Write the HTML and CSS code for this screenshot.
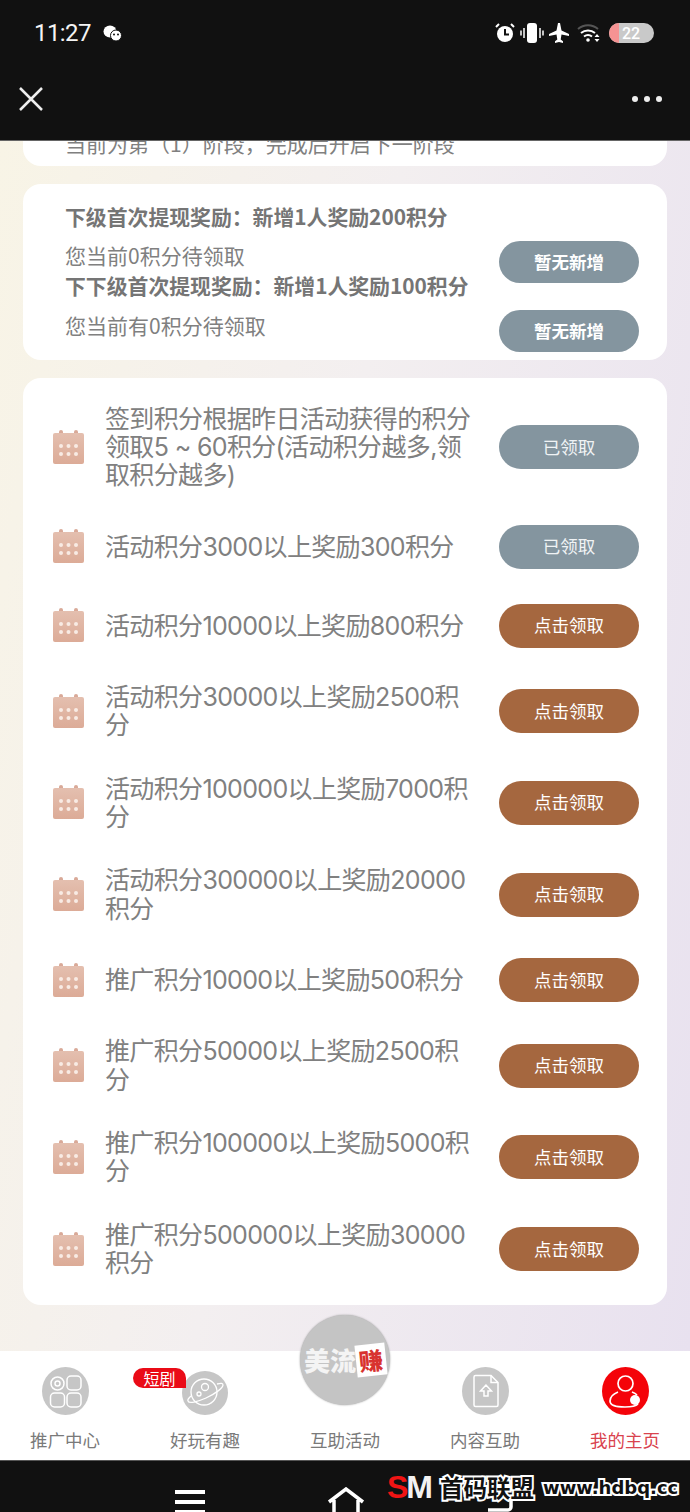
FILE: index.html
```html
<!DOCTYPE html>
<html lang="zh-CN">
<head>
    <meta charset="UTF-8">
    <meta name="viewport" content="width=device-width, initial-scale=1.0">
    <title>互助活动</title>
    <link rel="stylesheet" href="styles.css">
</head>
<body>
    <svg class="defs" width="0" height="0" aria-hidden="true">
        <defs>
            <linearGradient id="calFill" x1="0" y1="0" x2="0" y2="1">
                <stop offset="0" stop-color="#e4bfaf"/>
                <stop offset="1" stop-color="#dcab97"/>
            </linearGradient>
            <symbol id="calendar" viewBox="0 0 31 34">
                <rect x="6" y="0" width="4" height="7" rx="2" fill="#d9a998"/>
                <rect x="21" y="0" width="4" height="7" rx="2" fill="#d9a998"/>
                <path d="M2 3h27a2 2 0 0 1 2 2v27a2 2 0 0 1-2 2H2a2 2 0 0 1-2-2V5a2 2 0 0 1 2-2z" fill="url(#calFill)"/>
                <g fill="#f8ebe4">
                    <circle cx="8" cy="16" r="2"/><circle cx="15.500" cy="16" r="2"/><circle cx="23" cy="16" r="2"/>
                    <circle cx="8" cy="24" r="2"/><circle cx="15.500" cy="24" r="2"/><circle cx="23" cy="24" r="2"/>
                </g>
            </symbol>
        </defs>
    </svg>

    <header class="topbar">
        <div class="status">
            <div class="status-left">
                <span class="clock">11:27</span>
                <svg class="wechat" width="19" height="17" viewBox="0 0 19 17">
                    <ellipse cx="7" cy="6.500" rx="6.500" ry="6" fill="#fff"/>
                    <ellipse cx="13" cy="10.500" rx="5.500" ry="5.500" fill="#fff" stroke="#111" stroke-width="1"/>
                    <circle cx="11" cy="9.500" r="1" fill="#111"/><circle cx="15" cy="9.500" r="1" fill="#111"/>
                </svg>
            </div>
            <div class="status-right">
                <svg width="20" height="20" viewBox="0 0 20 20">
                    <circle cx="10" cy="11" r="8" fill="#fff"/>
                    <path d="M10 6v5.500h4" fill="none" stroke="#111" stroke-width="2"/>
                    <path d="M1 4l3-3M19 4l-3-3" stroke="#fff" stroke-width="2"/>
                </svg>
                <svg width="24" height="20" viewBox="0 0 24 20">
                    <rect x="7" y="0" width="10" height="20" rx="3" fill="#fff"/>
                    <path d="M4 5v10M1 7.500v5M20 5v10M23 7.500v5" stroke="#fff" stroke-width="1.500"/>
                </svg>
                <svg width="20" height="20" viewBox="0 0 20 20">
                    <path d="M9 0h2l1.500 7.500L20 11v2l-7.500-1.500-.8 5 2.300 1.700V20L10 19l-4 1v-1.800l2.300-1.700-.8-5L0 13v-2l7.500-3.500z" fill="#fff"/>
                </svg>
                <svg class="wifi" width="24" height="20" viewBox="0 0 24 20">
                    <path d="M1 6a15 15 0 0 1 20 0" fill="none" stroke="#555" stroke-width="2"/>
                    <path d="M4 10a11 11 0 0 1 14 0M7 13.500a6.500 6.500 0 0 1 8 0" fill="none" stroke="#fff" stroke-width="2"/>
                    <circle cx="11" cy="17" r="1.800" fill="#fff"/>
                    <path d="M20 11l2.500 3h-5zM20 19l2.500-3h-5z" fill="#fff"/>
                </svg>
                <div class="battery"><span class="battery-level"></span><span class="battery-num">22</span></div>
            </div>
        </div>
        <div class="titlebar">
            <svg width="26" height="26" viewBox="0 0 26 26">
                <path d="M2 2l22 22M24 2L2 24" stroke="#eee" stroke-width="2.500" fill="none"/>
            </svg>
            <div class="dots"><i></i><i></i><i></i></div>
        </div>
    </header>

    <main class="content">
        <section class="card card-cut">
            <p class="sub">当前为第（1）阶段，完成后开启下一阶段</p>
        </section>

        <section class="card card-invite">
            <div class="invite-text">
                <h2 class="invite-title">下级首次提现奖励：新增1人奖励200积分</h2>
                <p class="sub sub-gap">您当前0积分待领取</p>
                <h2 class="invite-title">下下级首次提现奖励：新增1人奖励100积分</h2>
                <p class="sub sub-gap">您当前有0积分待领取</p>
            </div>
            <div class="invite-btns">
                <button class="btn btn-grey btn-small">暂无新增</button>
                <button class="btn btn-grey btn-small">暂无新增</button>
            </div>
        </section>

        <section class="card card-tasks">
            <div class="task">
                <svg class="cal"><use href="#calendar"/></svg>
                <p class="task-text">签到积分根据昨日活动获得的积分领取5 ~ 60积分(活动积分越多,领取积分越多)</p>
                <button class="btn btn-grey btn-thin">已领取</button>
            </div>
            <div class="task">
                <svg class="cal"><use href="#calendar"/></svg>
                <p class="task-text">活动积分3000以上奖励300积分</p>
                <button class="btn btn-grey btn-thin">已领取</button>
            </div>
            <div class="task">
                <svg class="cal"><use href="#calendar"/></svg>
                <p class="task-text">活动积分10000以上奖励800积分</p>
                <button class="btn btn-brown">点击领取</button>
            </div>
            <div class="task">
                <svg class="cal"><use href="#calendar"/></svg>
                <p class="task-text">活动积分30000以上奖励2500积分</p>
                <button class="btn btn-brown">点击领取</button>
            </div>
            <div class="task">
                <svg class="cal"><use href="#calendar"/></svg>
                <p class="task-text">活动积分100000以上奖励7000积分</p>
                <button class="btn btn-brown">点击领取</button>
            </div>
            <div class="task">
                <svg class="cal"><use href="#calendar"/></svg>
                <p class="task-text">活动积分300000以上奖励20000积分</p>
                <button class="btn btn-brown">点击领取</button>
            </div>
            <div class="task">
                <svg class="cal"><use href="#calendar"/></svg>
                <p class="task-text">推广积分10000以上奖励500积分</p>
                <button class="btn btn-brown">点击领取</button>
            </div>
            <div class="task">
                <svg class="cal"><use href="#calendar"/></svg>
                <p class="task-text">推广积分50000以上奖励2500积分</p>
                <button class="btn btn-brown">点击领取</button>
            </div>
            <div class="task">
                <svg class="cal"><use href="#calendar"/></svg>
                <p class="task-text">推广积分100000以上奖励5000积分</p>
                <button class="btn btn-brown">点击领取</button>
            </div>
            <div class="task">
                <svg class="cal"><use href="#calendar"/></svg>
                <p class="task-text">推广积分500000以上奖励30000积分</p>
                <button class="btn btn-brown">点击领取</button>
            </div>
        </section>
    </main>

    <nav class="tabs">
        <a class="tab">
            <span class="tab-icon">
                <svg width="47" height="48" viewBox="0 0 47 48">
                    <ellipse cx="23.500" cy="24" rx="23.500" ry="24" fill="#c6c6c6"/>
                    <g fill="none" stroke="#fff" stroke-width="1.500">
                        <circle cx="15.500" cy="16.500" r="6.500"/><circle cx="15.500" cy="16.500" r="2.500"/>
                        <rect x="25" y="9" width="14" height="14" rx="4"/>
                        <rect x="8.500" y="26" width="14" height="14" rx="4"/>
                        <rect x="25" y="26" width="14" height="14" rx="4"/>
                    </g>
                </svg>
            </span>
            <span class="tab-label">推广中心</span>
        </a>
        <a class="tab">
            <span class="tab-icon">
                <svg width="46" height="44" viewBox="0 0 46 44">
                    <ellipse cx="23" cy="22" rx="23" ry="22" fill="#c6c6c6"/>
                    <g fill="none" stroke="#fff" stroke-width="1.300">
                        <circle cx="22" cy="21" r="13"/>
                        <path d="M35 13c4-1 6-1 6 1 0 3-8 9-17 13-9 4-17 6-18 3-1-2 1-3 3-5"/>
                        <circle cx="23" cy="16" r="3.500"/><circle cx="17" cy="23" r="2"/>
                    </g>
                </svg>
                <span class="badge">短剧</span>
            </span>
            <span class="tab-label">好玩有趣</span>
        </a>
        <a class="tab tab-center">
            <span class="logo-circle">
                <span class="logo-text">美流</span>
                <span class="logo-card">赚</span>
            </span>
            <span class="tab-label">互助活动</span>
        </a>
        <a class="tab">
            <span class="tab-icon">
                <svg width="47" height="48" viewBox="0 0 47 48">
                    <ellipse cx="23.500" cy="24" rx="23.500" ry="24" fill="#c6c6c6"/>
                    <g fill="none" stroke="#fff" stroke-width="1.500">
                        <path d="M12 10a1.500 1.500 0 0 1 1.500-1.500H29l7 7V38a1.500 1.500 0 0 1-1.500 1.500h-21A1.500 1.500 0 0 1 12 38z"/>
                        <path d="M29 8.500V15.500h7"/>
                        <path d="M24 18l-5.500 6H22v5h4v-5h3.500z"/>
                    </g>
                </svg>
            </span>
            <span class="tab-label">内容互助</span>
        </a>
        <a class="tab tab-active">
            <span class="tab-icon">
                <svg width="47" height="48" viewBox="0 0 47 48">
                    <ellipse cx="23.500" cy="24" rx="23.500" ry="24" fill="#f40309"/>
                    <g fill="none" stroke="#fff" stroke-width="1.700">
                        <circle cx="23.500" cy="16.500" r="7.500"/>
                        <path d="M16 25c-5 2-8 5-8 9 0 4 6 6 15 6 6 0 11-1 13-3M30 25c2 .8 4 2 5 3"/>
                    </g>
                    <circle cx="33" cy="33" r="5" fill="#fff"/>
                </svg>
            </span>
            <span class="tab-label">我的主页</span>
        </a>
    </nav>

    <footer class="sysbar">
        <svg class="sys-menu" width="30" height="22" viewBox="0 0 30 22">
            <path d="M0 2h30M0 12h30M0 22h30" stroke="#fff" stroke-width="4"/>
        </svg>
        <svg class="sys-home" width="38" height="25" viewBox="0 0 38 25">
            <path d="M2 15L19 2l17 13M7 13v12M31 13v12" fill="none" stroke="#fff" stroke-width="3.500"/>
        </svg>
        <svg class="sys-back" width="28" height="25" viewBox="0 0 28 25">
            <path d="M24 12v8a3 3 0 0 1-3 3H1" fill="none" stroke="#fff" stroke-width="3.500"/>
        </svg>
        <div class="watermark">
            <span class="wm-logo"><b class="wm-s">S</b><b class="wm-m">M</b></span>
            <span class="wm-cn">首码联盟</span>
            <span class="wm-url">www.hdbq.cc</span>
        </div>
    </footer>
</body>
</html>
```

FILE: styles.css
```css
* {
    box-sizing: border-box;
}

body {
    margin: 0;
    height: 1512px;
    display: flex;
    flex-direction: column;
    overflow: hidden;
    background: #111;
    font-family: "Noto Sans CJK SC", sans-serif;
    color: #777;
}

p, h2 {
    margin: 0;
}

.defs {
    position: absolute;
}

/* top black area */
.topbar {
    height: 141px;
    flex: none;
    background: #111;
    color: #fff;
    padding: 0 28px 9px 18px;
    border-bottom: 1px solid #666;
}

.status {
    height: 66px;
    display: flex;
    align-items: center;
    justify-content: space-between;
    padding-left: 16px;
    padding-right: 8px;
}

.status-left, .status-right {
    display: flex;
    align-items: center;
}

.clock {
    font-family: Roboto, sans-serif;
    font-size: 24px;
    letter-spacing: -0.6px;
    color: #f4f4f4;
}

.wechat {
    margin-left: 12px;
}

.status-right {
    gap: 5px;
}

.wifi {
    margin-left: 3px;
}

.battery {
    width: 45px;
    height: 20px;
    margin-left: 3px;
    border-radius: 10px;
    background: #c9c9c9;
    overflow: hidden;
    display: flex;
    align-items: center;
}

.battery-level {
    width: 10px;
    height: 100%;
    background: #f59393;
}

.battery-num {
    font-family: Roboto, sans-serif;
    font-size: 16px;
    font-weight: 500;
    margin-left: 3px;
}

.titlebar {
    height: 66px;
    display: flex;
    align-items: center;
    justify-content: space-between;
}

.dots {
    display: flex;
    gap: 6px;
}

.dots i {
    width: 6px;
    height: 6px;
    border-radius: 50%;
    background: #eee;
}

/* scrolled content */
.content {
    flex: 1;
    min-height: 0;
    overflow: hidden;
    padding: 0 23px;
    display: flex;
    flex-direction: column;
    gap: 18px;
    background: linear-gradient(100deg, #f8f4e6 0%, #f3eff0 45%, #e8e1ef 100%);
}

.card {
    background: #fff;
    border-radius: 18px;
    flex: none;
}

.card-cut {
    margin-top: -30px;
    padding: 18px 42px 9px;
}

.sub {
    font-size: 21px;
    line-height: 28px;
    color: #808080;
}

.sub-gap {
    margin-top: 11px;
}

.card-invite {
    height: 176px;
    display: flex;
    justify-content: space-between;
    padding: 18px 28px 0 42px;
}

.invite-title {
    font-size: 20.85px;
    line-height: 28px;
    font-weight: 700;
    color: #757575;
}

.invite-text .sub + .invite-title {
    margin-top: 2px;
}

.invite-text .sub:last-child {
    margin-top: 12px;
}

.invite-btns {
    display: flex;
    flex-direction: column;
    gap: 27px;
    padding-top: 39px;
}

.btn {
    width: 140px;
    height: 44px;
    flex: none;
    border: 0;
    border-radius: 22px;
    padding: 0 0 2px;
    color: #fff;
    font-family: "Noto Sans CJK SC", sans-serif;
    font-size: 17.5px;
}

.btn-grey {
    background: #84959f;
}

.btn-brown {
    background: #a5673f;
}

.btn-small {
    height: 42px;
    font-weight: 700;
}

.btn-thin {
    color: #f0f3f5;
}

.card-tasks {
    padding: 9px 28px 10px 30px;
}

.task {
    display: grid;
    grid-template-columns: 31px 368px 140px;
    column-gap: 22px;
    align-items: center;
    padding: 17.5px 0;
}

.task .btn {
    margin-left: 3px;
}

.cal {
    width: 31px;
    height: 34px;
    margin-top: -1px;
}

.task-text {
    margin-left: -1px;
    font-family: Inter, "Noto Sans CJK SC", sans-serif;
    font-size: 25px;
    letter-spacing: -0.65px;
    line-height: 28.4px;
    color: #808080;
}

/* bottom tabs */
.tabs {
    position: relative;
    height: 109px;
    flex: none;
    background: #fff;
    display: grid;
    grid-template-columns: repeat(5, 140px);
    grid-template-rows: 109px;
    justify-content: center;
}

.tab {
    display: flex;
    flex-direction: column;
    align-items: center;
    justify-content: flex-end;
    padding-bottom: 8px;
}

.tab-icon {
    position: relative;
    height: 48px;
    display: flex;
    align-items: flex-end;
    margin-bottom: 13px;
}

.tab-label {
    font-size: 17.5px;
    line-height: 24px;
    color: #7a7a7a;
}

.tab-active .tab-label {
    color: #d9434e;
}

.badge {
    position: absolute;
    top: 1px;
    right: 42px;
    width: 53px;
    height: 20px;
    border-radius: 10px 10px 0 10px;
    background: #ea0b17;
    color: #fff;
    font-size: 16px;
    line-height: 20px;
    text-align: center;
}

.logo-circle {
    width: 90px;
    height: 90px;
    flex: none;
    margin-bottom: 23px;
    border-radius: 50%;
    background: #c4c4c4;
    box-shadow: 0 0 2px #999;
    display: flex;
    align-items: center;
    padding-left: 4px;
}

.logo-text {
    font-size: 26px;
    line-height: 30px;
    font-weight: 900;
    color: #f4f4f4;
}

.logo-card {
    width: 30px;
    height: 32px;
    background: #fff;
    color: #d8322f;
    font-size: 24px;
    line-height: 32px;
    font-weight: 900;
    text-align: center;
    transform: rotate(-6deg);
}

/* android nav bar */
.sysbar {
    position: relative;
    height: 52px;
    flex: none;
    background: #111;
    border-top: 1px solid #555;
    display: grid;
    grid-template-columns: 30px 38px 28px;
    column-gap: 122px;
    justify-content: center;
    align-items: end;
}

.sys-menu, .sys-home, .sys-back {
    display: block;
}

/* site stamp that was put over the screenshot */
.watermark {
    position: absolute;
    left: 387px;
    top: 8px;
    display: flex;
    align-items: center;
    gap: 9px;
    white-space: nowrap;
}

.wm-logo {
    font-family: "Liberation Sans", sans-serif;
    font-size: 32px;
    line-height: 36px;
    letter-spacing: -2px;
}

.wm-s {
    color: #f01414;
}

.wm-m {
    color: #f2f2f2;
}

.wm-cn, .wm-url {
    color: #111;
    -webkit-text-stroke: 4px #fff;
    paint-order: stroke fill;
    font-weight: 700;
}

.wm-cn {
    font-size: 23.5px;
}

.wm-url {
    font-family: "DejaVu Sans", sans-serif;
    font-size: 18px;
}
```
